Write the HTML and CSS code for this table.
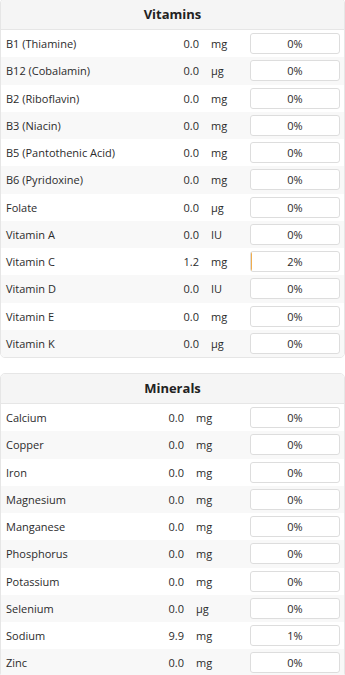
FILE: index.html
```html
<!DOCTYPE html>
<html>
<head>
<meta charset="utf-8">
<link rel="stylesheet" href="styles.css">
</head>
<body>
<section class="panel panel-vit">
  <div class="panel-head">Vitamins</div>
  <div class="row"><span class="name">B1 (Thiamine)</span><span class="amt">0.0</span><span class="unit">mg</span><span class="pct">0%</span></div>
  <div class="row"><span class="name">B12 (Cobalamin)</span><span class="amt">0.0</span><span class="unit">µg</span><span class="pct">0%</span></div>
  <div class="row"><span class="name">B2 (Riboflavin)</span><span class="amt">0.0</span><span class="unit">mg</span><span class="pct">0%</span></div>
  <div class="row"><span class="name">B3 (Niacin)</span><span class="amt">0.0</span><span class="unit">mg</span><span class="pct">0%</span></div>
  <div class="row"><span class="name">B5 (Pantothenic Acid)</span><span class="amt">0.0</span><span class="unit">mg</span><span class="pct">0%</span></div>
  <div class="row"><span class="name">B6 (Pyridoxine)</span><span class="amt">0.0</span><span class="unit">mg</span><span class="pct">0%</span></div>
  <div class="row"><span class="name">Folate</span><span class="amt">0.0</span><span class="unit">µg</span><span class="pct">0%</span></div>
  <div class="row"><span class="name">Vitamin A</span><span class="amt">0.0</span><span class="unit">IU</span><span class="pct">0%</span></div>
  <div class="row"><span class="name">Vitamin C</span><span class="amt">1.2</span><span class="unit">mg</span><span class="pct"><i class="fill" style="width:1px"></i><b>2%</b></span></div>
  <div class="row"><span class="name">Vitamin D</span><span class="amt">0.0</span><span class="unit">IU</span><span class="pct">0%</span></div>
  <div class="row"><span class="name">Vitamin E</span><span class="amt">0.0</span><span class="unit">mg</span><span class="pct">0%</span></div>
  <div class="row"><span class="name">Vitamin K</span><span class="amt">0.0</span><span class="unit">µg</span><span class="pct">0%</span></div>
</section>
<section class="panel panel-min">
  <div class="panel-head">Minerals</div>
  <div class="row"><span class="name">Calcium</span><span class="amt">0.0</span><span class="unit">mg</span><span class="pct">0%</span></div>
  <div class="row"><span class="name">Copper</span><span class="amt">0.0</span><span class="unit">mg</span><span class="pct">0%</span></div>
  <div class="row"><span class="name">Iron</span><span class="amt">0.0</span><span class="unit">mg</span><span class="pct">0%</span></div>
  <div class="row"><span class="name">Magnesium</span><span class="amt">0.0</span><span class="unit">mg</span><span class="pct">0%</span></div>
  <div class="row"><span class="name">Manganese</span><span class="amt">0.0</span><span class="unit">mg</span><span class="pct">0%</span></div>
  <div class="row"><span class="name">Phosphorus</span><span class="amt">0.0</span><span class="unit">mg</span><span class="pct">0%</span></div>
  <div class="row"><span class="name">Potassium</span><span class="amt">0.0</span><span class="unit">mg</span><span class="pct">0%</span></div>
  <div class="row"><span class="name">Selenium</span><span class="amt">0.0</span><span class="unit">µg</span><span class="pct">0%</span></div>
  <div class="row"><span class="name">Sodium</span><span class="amt">9.9</span><span class="unit">mg</span><span class="pct">1%</span></div>
  <div class="row"><span class="name">Zinc</span><span class="amt">0.0</span><span class="unit">mg</span><span class="pct">0%</span></div>
</section>
</body>
</html>
```

FILE: styles.css
```css
html, body {
  margin: 0;
  padding: 0;
  background: #ffffff;
}
body {
  font-family: "Open Sans", "Liberation Sans", sans-serif;
  font-size: 11px;
  color: #2b2b2b;
  overflow: hidden;
}
.panel {
  border: 1px solid #e6e6e6;
  border-radius: 5px;
  overflow: hidden;
  background: #ffffff;
  --unit-w: 39px;
}
.panel-vit {
  margin-top: -2px;
}
.panel-min {
  margin-top: 15px;
  --unit-w: 54px;
}
.panel-head {
  height: 29px;
  line-height: 29px;
  background: #f5f5f5;
  border-bottom: 1px solid #e6e6e6;
  text-align: center;
  font-weight: 700;
  font-size: 13px;
  color: #222222;
}
.panel-vit .panel-head {
  height: 30px;
  line-height: 31px;
}
.row {
  display: grid;
  grid-template-columns: 1fr auto var(--unit-w) 90px;
  align-items: center;
  height: 27.25px;
  padding: 0 4px 0 5px;
}
.row:nth-of-type(odd) {
  background: #f8f8f8;
}
.amt {
  text-align: right;
  padding-right: 12px;
}
.pct {
  position: relative;
  height: 19px;
  line-height: 19px;
  border: 1px solid #dddddd;
  border-radius: 3px;
  background: #ffffff;
  text-align: center;
  overflow: hidden;
}
.pct b {
  position: relative;
  font-weight: 400;
}
.fill {
  position: absolute;
  left: 0;
  top: 0;
  bottom: 0;
  background: #f0ad4e;
}
```
